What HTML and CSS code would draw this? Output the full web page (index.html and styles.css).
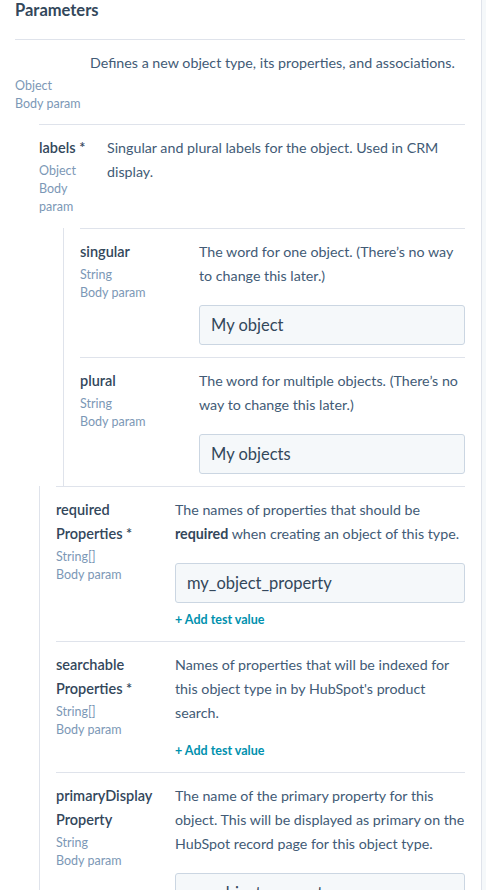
FILE: index.html
```html
<!DOCTYPE html>
<html lang="en">
<head>
<meta charset="utf-8">
<title>Parameters</title>
<link rel="stylesheet" href="styles.css">
</head>
<body>
<div class="page">
  <main class="params">
    <h2 class="title">Parameters</h2>

    <div class="param param--root">
      <div class="name-col">
        <div class="name">&nbsp;</div>
        <div class="meta-list">
          <div class="meta">Object</div>
          <div class="meta">Body param</div>
        </div>
      </div>
      <div class="body-col">
        <p class="desc">Defines a new object type, its properties, and associations.</p>
      </div>
    </div>

    <div class="children children--root">
      <div class="param param--labels">
        <div class="name-col">
          <div class="name">labels *</div>
          <div class="meta-list">
            <div class="meta">Object</div>
            <div class="meta">Body param</div>
          </div>
        </div>
        <div class="body-col">
          <p class="desc">Singular and plural labels for the object. Used in CRM display.</p>
        </div>
      </div>

      <div class="children children--labels">
        <div class="param param--wide">
          <div class="name-col">
            <div class="name">singular</div>
            <div class="meta-list">
              <div class="meta">String</div>
              <div class="meta">Body param</div>
            </div>
          </div>
          <div class="body-col">
            <p class="desc">The word for one object. (There’s no way to change this later.)</p>
            <div class="values">
              <div class="input">My object</div>
            </div>
          </div>
        </div>
        <div class="param param--wide">
          <div class="name-col">
            <div class="name">plural</div>
            <div class="meta-list">
              <div class="meta">String</div>
              <div class="meta">Body param</div>
            </div>
          </div>
          <div class="body-col">
            <p class="desc">The word for multiple objects. (There’s no way to change this later.)</p>
            <div class="values">
              <div class="input">My objects</div>
            </div>
          </div>
        </div>
      </div>

      <div class="children children--siblings">
        <div class="param param--wide">
          <div class="name-col">
            <div class="name">required<br>Properties *</div>
            <div class="meta-list">
              <div class="meta">String[]</div>
              <div class="meta">Body param</div>
            </div>
          </div>
          <div class="body-col">
            <p class="desc">The names of properties that should be <strong>required</strong> when creating an object of this type.</p>
            <div class="values">
              <div class="input">my_object_property</div>
              <a class="add-link add-link--after-input" href="#">+ Add test value</a>
            </div>
          </div>
        </div>
        <div class="param param--wide">
          <div class="name-col">
            <div class="name">searchable<br>Properties *</div>
            <div class="meta-list">
              <div class="meta">String[]</div>
              <div class="meta">Body param</div>
            </div>
          </div>
          <div class="body-col">
            <p class="desc">Names of properties that will be indexed for this object type in by HubSpot's product search.</p>
            <div class="values">
              <a class="add-link" href="#">+ Add test value</a>
            </div>
          </div>
        </div>
        <div class="param param--wide">
          <div class="name-col">
            <div class="name">primaryDisplay<br>Property</div>
            <div class="meta-list">
              <div class="meta">String</div>
              <div class="meta">Body param</div>
            </div>
          </div>
          <div class="body-col">
            <p class="desc">The name of the primary property for this object. This will be displayed as primary on the HubSpot record page for this object type.</p>
            <div class="values">
              <div class="input">my_object_property</div>
            </div>
          </div>
        </div>
      </div>
    </div>
  </main>
  <aside class="side"></aside>
</div>
</body>
</html>
```

FILE: styles.css
```css
* { box-sizing: border-box; }

html, body {
  margin: 0;
  padding: 0;
  background: #ffffff;
}

body {
  font-family: Lato, "Open Sans", "Liberation Sans", sans-serif;
  color: #33475b;
  -webkit-font-smoothing: antialiased;
}

.page {
  display: flex;
  width: 486px;
  height: 890px;
  overflow: hidden;
}

.params {
  width: 481px;
  flex: none;
  padding: 0 16px 0 15px;
}

.side {
  flex: 1;
  border-left: 1px solid #dfe3eb;
  background: #f5f8fa;
}

.title {
  margin: 0;
  padding: 0 0 19px;
  font-size: 16.5px;
  line-height: 20px;
  font-weight: 700;
  color: #33475b;
}

.param {
  display: grid;
  grid-template-columns: 119px 1fr;
  border-top: 1px solid #dfe3eb;
  padding: 11px 0 12px;
}

.param--root {
  grid-template-columns: 75px 1fr;
  padding-bottom: 11px;
}
.param--root .name-col { padding-right: 0; }
.param--labels { grid-template-columns: 68px 1fr; }
.param--labels .name-col { padding-right: 12px; }

.name-col {
  padding-right: 8px;
  min-width: 0;
}

.name {
  font-size: 14.5px;
  line-height: 24px;
  font-weight: 600;
  color: #33475b;
}

.meta-list { margin-top: 2px; }

.meta {
  font-size: 12.5px;
  line-height: 18px;
  color: #7c98b6;
}

.desc {
  margin: 0;
  font-size: 14.25px;
  line-height: 24px;
  color: #425b76;
}

.desc strong {
  font-weight: 700;
  color: #33475b;
}

.children--root { margin-left: 24px; }

.children--labels {
  margin-left: 24px;
  border-left: 1px solid #dfe3eb;
  padding-left: 16px;
}

.children--siblings {
  border-left: 1px solid #dfe3eb;
  padding-left: 16px;
}

.values {
  margin-top: 17px;
  display: flex;
  flex-direction: column;
  align-items: flex-start;
}

.input {
  align-self: stretch;
  height: 40px;
  padding: 0 11px;
  display: flex;
  align-items: center;
  background: #f5f8fa;
  border: 1px solid #cbd6e2;
  border-radius: 3px;
  font-size: 16.5px;
  color: #33475b;
}

.add-link {
  font-size: 12.5px;
  line-height: 18px;
  font-weight: 700;
  color: #0091ae;
  text-decoration: none;
}

.add-link--after-input { margin-top: 8px; }
```
